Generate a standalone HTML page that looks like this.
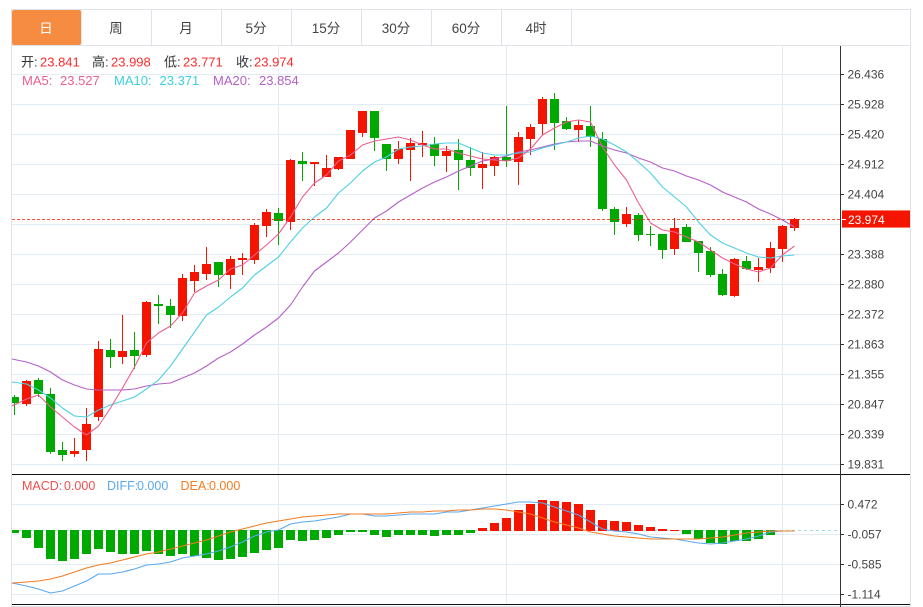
<!DOCTYPE html>
<html><head><meta charset="utf-8"><style>
html,body{margin:0;padding:0;background:#fff;width:923px;height:607px;overflow:hidden}
svg{display:block}
text{font-family:"Liberation Sans","Noto Sans CJK SC",sans-serif}
</style></head><body>
<svg width="923" height="607" viewBox="0 0 923 607" xmlns="http://www.w3.org/2000/svg">
<rect x="11.5" y="9.5" width="899" height="597" fill="#fff" stroke="#dfe3e8"/>
<rect x="12" y="10" width="69" height="35" rx="2" fill="#f58c41"/>
<path d="M81.5 10V45M151.5 10V45M221.5 10V45M291.5 10V45M361.5 10V45M431.5 10V45M501.5 10V45M571.5 10V45M12 45.5H910" stroke="#dfe3e8" fill="none"/>
<g font-size="13.5" text-anchor="middle" fill="#444">
<text x="46" y="33" fill="#fff">日</text><text x="116" y="33">周</text><text x="186" y="33">月</text><text x="256" y="33">5分</text><text x="326" y="33">15分</text><text x="396" y="33">30分</text><text x="466" y="33">60分</text><text x="536" y="33">4时</text>
</g>
<path d="M12 74.5H840M12 104.5H840M12 134.5H840M12 164.5H840M12 194.5H840M12 224.5H840M12 254.5H840M12 284.5H840M12 314.5H840M12 344.5H840M12 374.5H840M12 404.5H840M12 434.5H840M12 464.5H840M12 504.5H840M12 534.5H840M12 564.5H840M12 594.5H840M278.5 46V607M506.5 46V607M782.5 46V607" stroke="#e3ecf3" fill="none"/>
<path d="M12 474.5H910M12 604.5H910" stroke="#111" fill="none"/>
<path d="M840.5 46V607M840 74.500h4M840 104.500h4M840 134.500h4M840 164.500h4M840 194.500h4M840 254.500h4M840 284.500h4M840 314.500h4M840 344.500h4M840 374.500h4M840 404.500h4M840 434.500h4M840 464.500h4M840 504.500h4M840 534.500h4M840 564.500h4M840 594.500h4" stroke="#333" fill="none"/>
<g font-size="12" fill="#444">
<text x="847.500" y="78.500">26.436</text><text x="847.500" y="108.500">25.928</text><text x="847.500" y="138.500">25.420</text><text x="847.500" y="168.500">24.912</text><text x="847.500" y="198.500">24.404</text><text x="847.500" y="258.500">23.388</text><text x="847.500" y="288.500">22.880</text><text x="847.500" y="318.500">22.372</text><text x="847.500" y="348.500">21.863</text><text x="847.500" y="378.500">21.355</text><text x="847.500" y="408.500">20.847</text><text x="847.500" y="438.500">20.339</text><text x="847.500" y="468.500">19.831</text>
<text x="847.500" y="508.500">0.472</text><text x="847.500" y="538.500">-0.057</text><text x="847.500" y="568.500">-0.585</text><text x="847.500" y="598.500">-1.114</text>
</g>
<g stroke="#00a900" fill="none">
<path d="M14.5 395V415M38.5 378V397M50.5 388V454M62.5 442V461M110.5 339V368M134.5 332V369M158.5 295V324M170.5 299V328M218.5 262V287M278.5 208V245M302.5 152V181M374.5 111V151M386.5 144V171M434.5 137V166M458.5 139V190M470.5 147V176M506.5 106V167M554.5 93V150M566.5 117V130M590.5 106V147M602.5 132V211M614.5 207V235M638.5 213V241M650.5 226V246M662.5 234V259M686.5 224V242M698.5 241V272M710.5 247V277M722.5 269V296M746.5 256V270"/>
</g>
<g stroke="#f41500" fill="none">
<path d="M26.5 380V406M74.5 438V457M86.5 408V461M98.5 341V421M122.5 315V364M146.5 301V357M182.5 274V321M194.5 265V292M206.5 247V280M230.5 256V289M242.5 253V275M254.5 223V264M266.5 209V237M290.5 159V230M314.5 162V186M326.5 155V177M338.5 157V170M350.5 130V159M362.5 111V137M398.5 141V164M410.5 138V181M422.5 131V157M446.5 146V172M482.5 152V189M494.5 156V176M518.5 132V185M530.5 124V155M542.5 97V135M578.5 120V142M626.5 207V227M674.5 218V255M734.5 258V297M758.5 258V282M770.5 242V273M782.5 225V262M794.5 218V231"/>
</g>
<path fill="#00a900" d="M12 397h7v6h-7zM34 380h9v14h-9zM46 394h9v58h-9zM58 450h9v5h-9zM106 350h9v7h-9zM130 350h9v6h-9zM154 304h9v2h-9zM166 306h9v9h-9zM214 262h9v13h-9zM274 213h9v8h-9zM298 161h9v3h-9zM370 111h9v27h-9zM382 144h9v15h-9zM430 144h9v12h-9zM454 150h9v10h-9zM466 160h9v8h-9zM502 157h9v4h-9zM550 99h9v24h-9zM562 121h9v8h-9zM586 126h9v11h-9zM598 139h9v70h-9zM610 209h9v13h-9zM634 215h9v20h-9zM646 234h9v1h-9zM658 234h9v16h-9zM682 227h9v15h-9zM694 241h9v12h-9zM706 251h9v24h-9zM718 274h9v21h-9zM742 261h9v8h-9z"/>
<path fill="#f41500" d="M22 381h9v23h-9zM70 451h9v3h-9zM82 424h9v26h-9zM94 349h9v68h-9zM118 351h9v6h-9zM142 302h9v53h-9zM178 278h9v38h-9zM190 272h9v9h-9zM202 264h9v10h-9zM226 259h9v16h-9zM238 258h9v2h-9zM250 225h9v35h-9zM262 212h9v14h-9zM286 160h9v62h-9zM310 162h9v2h-9zM322 168h9v9h-9zM334 157h9v12h-9zM346 130h9v29h-9zM358 111h9v22h-9zM394 149h9v10h-9zM406 143h9v7h-9zM418 143h9v2h-9zM442 151h9v5h-9zM478 164h9v4h-9zM490 157h9v9h-9zM514 137h9v25h-9zM526 127h9v12h-9zM538 99h9v25h-9zM574 125h9v5h-9zM622 214h9v10h-9zM670 228h9v21h-9zM730 259h9v37h-9zM754 267h9v3h-9zM766 248h9v20h-9zM778 226h9v23h-9zM790 219h9v9h-9z"/>
<g fill="none" stroke-linejoin="round">
<path stroke="#b65fc9" stroke-width="1.1" d="M12 359L26.500 362L38.500 366L50.500 372L62.500 380L74.500 385L86.500 389L98.500 390L110.500 390L122.500 390L134.500 389L146.500 386L158.500 384L170.500 383L182.500 378L194.500 373L206.500 366L218.500 358L230.500 352L242.500 344L254.500 335L266.500 327L278.500 318L290.500 305L302.500 287L314.500 271L326.500 262L338.500 253L350.500 242L362.500 230L374.500 218L386.500 211L398.500 202L410.500 195L422.500 188L434.500 182L446.500 177L458.500 171L470.500 166L482.500 161L494.500 159L506.500 156L518.500 152L530.500 150L542.500 147L554.500 144L566.500 142L578.500 141L590.500 141L602.500 146L614.500 150L626.500 153L638.500 158L650.500 162L662.500 168L674.500 171L686.500 176L698.500 180L710.500 185L722.500 192L734.500 197L746.500 202L758.500 209L770.500 214L782.500 220L794.500 227"/>
<path stroke="#4fd0e4" stroke-width="1.1" d="M12 382L26.500 384L38.500 390L50.500 398L62.500 408L74.500 416L86.500 417L98.500 410L110.500 405L122.500 401L134.500 397L146.500 389L158.500 380L170.500 366L182.500 349L194.500 332L206.500 315L218.500 307L230.500 297L242.500 288L254.500 275L266.500 266L278.500 257L290.500 242L302.500 228L314.500 217L326.500 208L338.500 193L350.500 183L362.500 171L374.500 162L386.500 157L398.500 149L410.500 147L422.500 146L434.500 144L446.500 143L458.500 143L470.500 148L482.500 153L494.500 155L506.500 155L518.500 153L530.500 152L542.500 148L554.500 145L566.500 142L578.500 138L590.500 136L602.500 139L614.500 145L626.500 152L638.500 162L650.500 173L662.500 187L674.500 197L686.500 207L698.500 222L710.500 235L722.500 243L734.500 248L746.500 253L758.500 257L770.500 258L782.500 256L794.500 255"/>
<path stroke="#ec5f8e" stroke-width="1.1" d="M12 406L26.500 399L38.500 395L50.500 407L62.500 417L74.500 427L86.500 435L98.500 426L110.500 408L122.500 388L134.500 367L146.500 343L158.500 333L170.500 326L182.500 313L194.500 293L206.500 286L218.500 280L230.500 269L242.500 265L254.500 255L266.500 245L278.500 234L290.500 217L302.500 197L314.500 183L326.500 175L338.500 161L350.500 155L362.500 145L374.500 141L386.500 139L398.500 137L410.500 140L422.500 145L434.500 149L446.500 149L458.500 153L470.500 156L482.500 159L494.500 160L506.500 161L518.500 158L530.500 149L542.500 135L554.500 128L566.500 122L578.500 120L590.500 122L602.500 147L614.500 165L626.500 180L638.500 203L650.500 223L662.500 230L674.500 232L686.500 237L698.500 242L710.500 250L722.500 258L734.500 264L746.500 269L758.500 272L770.500 268L782.500 255L794.500 246"/>
</g>
<path d="M12 219.500H840" stroke="#f41500" stroke-opacity=".75" stroke-dasharray="3 2" fill="none"/>
<rect x="842" y="210" width="68" height="18" fill="#f41500"/>
<path d="M842 210.500H910M842 227.500H910" stroke="#f77a6c" fill="none"/>
<path d="M842 219.500h4" stroke="#fff" fill="none"/>
<text x="848" y="224" font-size="12" fill="#fff">23.974</text>
<path d="M12 530.500H840" stroke="#9fdcec" stroke-dasharray="3 3" fill="none"/>
<path fill="#00a900" d="M12 530h7v3h-7zM22 530h9v8h-9zM34 530h9v18h-9zM46 530h9v29h-9zM58 530h9v31h-9zM70 530h9v29h-9zM82 530h9v24h-9zM94 530h9v19h-9zM106 530h9v22h-9zM118 530h9v24h-9zM130 530h9v24h-9zM142 530h9v21h-9zM154 530h9v24h-9zM166 530h9v26h-9zM178 530h9v24h-9zM190 530h9v26h-9zM202 530h9v28h-9zM214 530h9v30h-9zM226 530h9v29h-9zM238 530h9v27h-9zM250 530h9v23h-9zM262 530h9v20h-9zM274 530h9v18h-9zM286 530h9v10h-9zM298 530h9v11h-9zM310 530h9v10h-9zM322 530h9v8h-9zM334 530h9v5h-9zM346 530h9v2h-9zM358 530h9v2h-9zM370 530h9v5h-9zM382 530h9v7h-9zM394 530h9v5h-9zM406 530h9v5h-9zM418 530h9v5h-9zM430 530h9v6h-9zM442 530h9v5h-9zM454 530h9v5h-9zM466 530h9v3h-9zM682 530h9v4h-9zM694 530h9v9h-9zM706 530h9v13h-9zM718 530h9v14h-9zM730 530h9v11h-9zM742 530h9v11h-9zM754 530h9v9h-9zM766 530h9v5h-9z"/>
<path fill="#f41500" d="M478 528h9v3h-9zM490 523h9v8h-9zM502 518h9v13h-9zM514 510h9v21h-9zM526 504h9v27h-9zM538 500h9v31h-9zM550 501h9v30h-9zM562 502h9v29h-9zM574 504h9v27h-9zM586 510h9v21h-9zM598 520h9v11h-9zM610 521h9v10h-9zM622 522h9v9h-9zM634 525h9v6h-9zM646 527h9v4h-9zM658 529h9v2h-9zM670 530h9v1h-9z"/>
<g fill="none" stroke-linejoin="round" stroke-width="1.100">
<path stroke="#5aa9ee" d="M12 583L26.500 586L38.500 589L50.500 593L62.500 591L74.500 586L86.500 581L98.500 574L110.500 574L122.500 572L134.500 569L146.500 565L158.500 564L170.500 562L182.500 558L194.500 556L206.500 554L218.500 551L230.500 547L242.500 542L254.500 536L266.500 532L278.500 530L290.500 524L302.500 522L314.500 521L326.500 519L338.500 517L350.500 514L362.500 514L374.500 516L386.500 516L398.500 515L410.500 514L422.500 514L434.500 514L446.500 512L458.500 512L470.500 510L482.500 508L494.500 506L506.500 504L518.500 502L530.500 502L542.500 503L554.500 507L566.500 511L578.500 515L590.500 522L602.500 529L614.500 531L626.500 532L638.500 534L650.500 537L662.500 538L674.500 539L686.500 541L698.500 543L710.500 544L722.500 543L734.500 541L746.500 539L758.500 536L770.500 532L782.500 531L794.500 531"/>
<path stroke="#f47b20" d="M12 583L26.500 582L38.500 581L50.500 579L62.500 576L74.500 572L86.500 568L98.500 565L110.500 563L122.500 560L134.500 557L146.500 554L158.500 552L170.500 549L182.500 546L194.500 543L206.500 540L218.500 536L230.500 532L242.500 529L254.500 526L266.500 523L278.500 521L290.500 519L302.500 517L314.500 516L326.500 515L338.500 514L350.500 514L362.500 514L374.500 514L386.500 514L398.500 513L410.500 512L422.500 512L434.500 511L446.500 511L458.500 510L470.500 510L482.500 509L494.500 509L506.500 510L518.500 512L530.500 514L542.500 518L554.500 522L566.500 525L578.500 528L590.500 532L602.500 534L614.500 536L626.500 537L638.500 538L650.500 539L662.500 539L674.500 539L686.500 539L698.500 539L710.500 538L722.500 537L734.500 535L746.500 533L758.500 532L770.500 531L782.500 531L794.500 531"/>
</g>
<g font-size="13">
<text x="21" y="66.500" fill="#333">开:</text><text x="40" y="66.500" fill="#fb2b2b">23.841</text>
<text x="92" y="66.500" fill="#333">高:</text><text x="111" y="66.500" fill="#fb2b2b">23.998</text>
<text x="164" y="66.500" fill="#333">低:</text><text x="183" y="66.500" fill="#fb2b2b">23.771</text>
<text x="236" y="66.500" fill="#333">收:</text><text x="254" y="66.500" fill="#fb2b2b">23.974</text>
<text x="22" y="85" fill="#ec5f8e">MA5:</text><text x="60" y="85" fill="#ec5f8e">23.527</text>
<text x="114" y="85" fill="#3dcde3">MA10:</text><text x="159.500" y="85" fill="#3dcde3">23.371</text>
<text x="213" y="85" fill="#b65fc9">MA20:</text><text x="259" y="85" fill="#b65fc9">23.854</text>
</g>
<g font-size="12.5">
<text x="22" y="490" fill="#ef4f4f">MACD:</text><text x="64" y="490" fill="#ef4f4f">0.000</text>
<text x="107" y="490" fill="#5aa9ee">DIFF:</text><text x="137" y="490" fill="#5aa9ee">0.000</text>
<text x="180.500" y="490" fill="#f47b20">DEA:</text><text x="209" y="490" fill="#f47b20">0.000</text>
</g>
</svg>
</body></html>
